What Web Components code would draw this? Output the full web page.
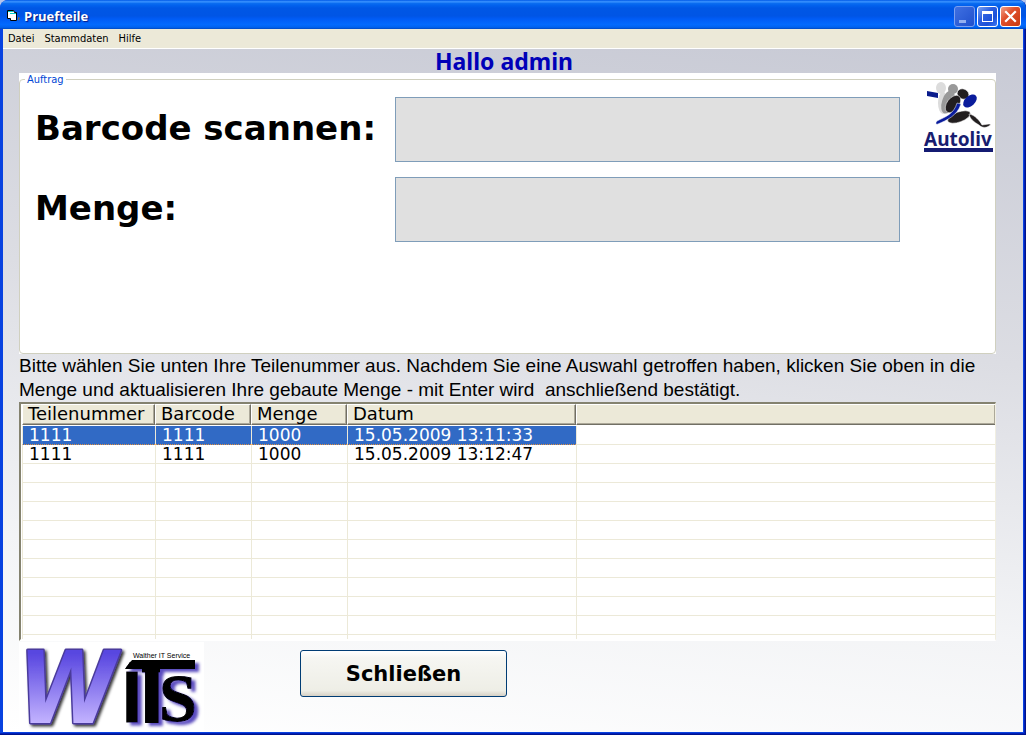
<!DOCTYPE html>
<html lang="de">
<head>
<meta charset="utf-8">
<title>Pruefteile</title>
<style>
  html, body {
    height: 100%;
    margin: 0;
  }
  body {
    font-family: "DejaVu Sans", sans-serif;
    color: #000;
    background: #b4c4ec;
  }
</style>
</head>
<body>
<xp-window>
  <xp-titlebar slot="title">Pruefteile</xp-titlebar>
  <xp-menubar slot="menu" items="Datei,Stammdaten,Hilfe"></xp-menubar>
  <user-greeting>Hallo admin</user-greeting>
  <xp-group label="Auftrag">
    <xp-field label="Barcode scannen:" name="barcode"></xp-field>
    <xp-field label="Menge:" name="menge"></xp-field>
    <autoliv-logo slot="aside"></autoliv-logo>
  </xp-group>
  <help-text>Bitte wählen Sie unten Ihre Teilenummer aus. Nachdem Sie eine Auswahl getroffen haben, klicken Sie oben in die<br>Menge und aktualisieren Ihre gebaute Menge - mit Enter wird&nbsp; anschließend bestätigt.</help-text>
  <part-list></part-list>
  <window-footer>
    <wits-logo></wits-logo>
    <xp-button>Schließen</xp-button>
  </window-footer>
</xp-window>

<script>
function define(name, html, setup) {
  customElements.define(name, class extends HTMLElement {
    constructor() {
      super();
      this.attachShadow({ mode: 'open' });
      this.shadowRoot.innerHTML = html;
    }

    connectedCallback() {
      if (setup) setup(this, this.shadowRoot);
    }
  });
}

define('xp-window', `
  <style>
    :host {
      display: flex;
      flex-direction: column;
      box-sizing: border-box;
      min-height: 100%;
      background: #0842e0;
      box-shadow: inset -1px -1px #00138c, inset -2px -2px #0020b8;
      border-radius: 8px 8px 0 0;
      overflow: hidden;
    }
    #client {
      flex: 1;
      display: flex;
      flex-direction: column;
      margin: 0 3px 3px;
      border-top: 1px solid #fff;
      padding: 0 27px 0 16px;
      background: linear-gradient(186deg, #c8cad5 0%, #dcdde3 40%, #f3f4f6 75%, #fff 100%);
    }
  </style>
  <slot name="title"></slot>
  <slot name="menu"></slot>
  <main id="client"><slot></slot></main>
`);

define('xp-titlebar', `
  <style>
    :host {
      display: flex;
      align-items: center;
      gap: 2px;
      box-sizing: border-box;
      height: 29px;
      padding: 3px 5px 0 6px;
      background: linear-gradient(#0058e6 0%, #3a93ff 6%, #0a6cf0 12%, #0262ee 18%, #0057e5 28%, #0055e5 55%, #005bf5 65%, #026afe 85%, #0062ef 94%, #0048c0 100%);
    }
    h1 {
      flex: 1;
      margin: 0 0 0 2px;
      font: bold 13px/20px "Open Sans", sans-serif;
      color: #fff;
      text-shadow: 1px 1px 1px #0a1883;
    }
    button {
      width: 21px;
      height: 21px;
      padding: 0;
      border: 1px solid #fff;
      border-radius: 3px;
      background: linear-gradient(135deg, #7ba2f0, #2c5fe0 40%, #1c50d8 70%, #3c79f5);
    }
    button svg {
      display: block;
    }
    #min {
      border-color: #7b9ff0;
      background: linear-gradient(135deg, #3f70e2, #2050cc);
    }
    #close {
      background: linear-gradient(135deg, #f0a088, #e0502c 40%, #d2421c 75%, #c83a10);
    }
  </style>
  <svg width="14" height="14" viewBox="0 0 14 14" aria-hidden="true">
    <path d="M1.500 1.500h6l1 2h2v8h-6v-2h-3z" fill="#fff" stroke="#000"/>
    <path d="M2 2h5v1H2zM4 4h6v1H4z" fill="#0cc"/>
    <path d="M12 8l2 1-2 3z" fill="#876a3c"/>
  </svg>
  <h1><slot></slot></h1>
  <button id="min" aria-label="Minimieren"><svg width="19" height="19"><path d="M4 13h7v3H4z" fill="#94b0f0"/></svg></button>
  <button id="max" aria-label="Maximieren"><svg width="19" height="19"><path d="M4 4h11v11H4zM5 7v7h9V7z" fill="#fff" fill-rule="evenodd"/></svg></button>
  <button id="close" aria-label="Beenden"><svg width="19" height="19"><path d="M5 5l9 9M14 5l-9 9" stroke="#fff" stroke-width="2.200" stroke-linecap="square"/></svg></button>
`);

define('xp-menubar', `
  <style>
    :host {
      display: block;
      margin: 0 3px;
      background: #ece9d8;
    }
    nav {
      display: flex;
      gap: 10px;
      height: 19px;
      padding: 0 5px;
    }
    a {
      font: 11px/19px "DejaVu Sans Condensed", "DejaVu Sans", sans-serif;
      color: #000;
      text-decoration: none;
    }
  </style>
  <nav></nav>
`, (el, root) => {
  root.querySelector('nav').innerHTML = el.getAttribute('items').split(',')
    .map(item => `<a href="#">${item}</a>`).join('');
});

define('user-greeting', `
  <style>
    :host {
      display: block;
    }
    h2 {
      margin: 0;
      padding-left: 416px;
      font: bold 23px/24px "Noto Sans", sans-serif;
      color: #0000b8;
    }
  </style>
  <h2><slot></slot></h2>
`);

define('xp-group', `
  <style>
    :host {
      display: block;
      background: #fff;
    }
    fieldset {
      display: flex;
      gap: 22px;
      box-sizing: border-box;
      min-width: 0;
      min-height: 281px;
      margin: 0;
      padding: 0 1px 0 15px;
      border: 1px solid #d0d0bf;
      border-radius: 4px;
    }
    legend {
      margin-left: -10px;
      padding: 0 2px;
      font: 11px/13px "DejaVu Sans Condensed", "DejaVu Sans", sans-serif;
      color: #0046d5;
    }
    #fields {
      flex: 1;
      min-width: 0;
      display: flex;
      flex-direction: column;
      gap: 15px;
      padding-top: 11px;
    }
  </style>
  <fieldset>
    <legend></legend>
    <div id="fields"><slot></slot></div>
    <slot name="aside"></slot>
  </fieldset>
`, (el, root) => {
  root.querySelector('legend').textContent = el.getAttribute('label');
});

define('xp-field', `
  <style>
    :host {
      display: flex;
    }
    label {
      flex: 0 0 360px;
      font-weight: bold;
      font-size: 34px;
      line-height: 62px;
      white-space: nowrap;
    }
    input {
      flex: 1;
      min-width: 0;
      box-sizing: border-box;
      height: 65px;
      padding: 4px 8px;
      border: 1px solid #7f9db9;
      background: #e0e0e0;
      font: bold 34px "DejaVu Sans", sans-serif;
    }
  </style>
  <label for="field"></label>
  <input id="field" type="text">
`, (el, root) => {
  root.querySelector('label').textContent = el.getAttribute('label');
  root.querySelector('input').name = el.getAttribute('name');
});

define('autoliv-logo', `
  <style>
    :host {
      display: block;
      flex: none;
      width: 72px;
    }
    svg {
      display: block;
      overflow: visible;
    }
    text {
      font: bold 19px "Noto Sans", sans-serif;
    }
  </style>
  <svg width="72" height="72" viewBox="0 0 72 72" role="img" aria-label="Autoliv">
    <path d="M5 5l11 2v5L5 10z" fill="#0a1c8c"/>
    <g fill="#dcdcdc">
      <ellipse cx="19" cy="2" rx="5" ry="6"/>
      <ellipse cx="21" cy="17" rx="5" ry="11"/>
    </g>
    <g fill="#999">
      <circle cx="31" cy="3" r="5"/>
      <ellipse cx="26" cy="16" rx="6" ry="12" transform="rotate(18 26 16)"/>
    </g>
    <g fill="#221e1f" stroke="#fff" stroke-width="0.500">
      <ellipse cx="41" cy="8" rx="6" ry="5" transform="rotate(25 41 8)"/>
      <ellipse cx="31" cy="18" rx="6" ry="10" transform="rotate(38 31 18)"/>
      <ellipse cx="37" cy="31" rx="12" ry="5" transform="rotate(-20 37 31)"/>
      <path d="M47 28c6 1 11 7 13 11l7-1c2 0 2 1 0 2-3 2-7 2-10-1-5-3-9-6-10-11z"/>
    </g>
    <ellipse cx="48" cy="15" rx="8" ry="5" transform="rotate(-42 48 15)" fill="#0a1c9c"/>
    <path d="M35 17l4 1C35 30 25 34 16 38c-2 1-3-1-1-3C23 31 32 28 35 17z" fill="#0a1c9c" stroke="#fff" stroke-width="0.500"/>
    <text x="2" y="60" fill="#181d70">Autoliv</text>
    <path d="M2 62h69v4H2z" fill="#141b72"/>
  </svg>
`);

define('help-text', `
  <style>
    :host {
      display: block;
    }
    p {
      margin: 0;
      font: 19px/24px "Liberation Sans", Arial, sans-serif;
    }
  </style>
  <p><slot></slot></p>
`);

define('part-list', `
  <style>
    :host {
      flex: 1 1 0;
      display: block;
      min-height: 120px;
      overflow: hidden;
      padding-left: 1px;
      background: #fff;
      border: 2px solid;
      border-color: #84826f #f1efe2 #fff #84826f;
      border-right-width: 1px;
    }
    table {
      width: 100%;
      table-layout: fixed;
      border-spacing: 0;
      font-size: 17px;
    }
    th, td {
      box-sizing: border-box;
      text-align: left;
      vertical-align: top;
      font-weight: normal;
      white-space: nowrap;
    }
    th {
      height: 21px;
      padding: 0 0 0 5px;
      font-size: 18px;
      line-height: 18px;
      background: #ece9d8;
      border-top: 1px solid #fff;
      border-left: 1px solid #fff;
      border-right: 1px solid #716f64;
      border-bottom: 1px solid #716f64;
      box-shadow: inset -1px -1px #aca899;
    }
    td {
      height: 19px;
      padding: 0 0 0 6px;
      line-height: 18px;
      border-left: 1px solid #ece9d8;
      border-bottom: 1px solid #ece9d8;
    }
    tbody::before {
      content: "";
      display: table-row;
      height: 1px;
    }
    th:last-child {
      border-right: 0;
    }
    .selected td:not(:last-child) {
      background: #316ac5;
      color: #fff;
      border-bottom: 1px dotted #e09040;
    }
    .c1 { width: 133px; }
    .c2, .c3 { width: 96px; }
    .c4 { width: 229px; }
  </style>
  <table>
    <thead>
      <tr><th class="c1">Teilenummer</th><th class="c2">Barcode</th><th class="c3">Menge</th><th class="c4">Datum</th><th></th></tr>
    </thead>
    <tbody></tbody>
  </table>
`, (el, root) => {
  const rows = [
    ['1111', '1111', '1000', '15.05.2009 13:11:33', ''],
    ['1111', '1111', '1000', '15.05.2009 13:12:47', '']
  ];
  // empty grid lines fill the rest of the box
  while (rows.length < 12) rows.push(['', '', '', '', '']);
  root.querySelector('tbody').innerHTML = rows.map((row, i) =>
    `<tr${i === 0 ? ' class="selected"' : ''}>${row.map(cell => `<td>${cell}</td>`).join('')}</tr>`
  ).join('');
});

define('window-footer', `
  <style>
    :host {
      display: flex;
      align-items: flex-start;
      gap: 96px;
      margin-top: 1px;
    }
    ::slotted(xp-button) {
      margin-top: 8px;
    }
  </style>
  <slot></slot>
`);

define('wits-logo', `
  <style>
    :host {
      display: block;
      width: 185px;
      background: #fff;
    }
    svg {
      display: block;
      overflow: visible;
    }
    .w { font: italic bold 100px "DejaVu Sans Condensed", "DejaVu Sans", sans-serif; }
    .sans { font-family: "Liberation Sans", sans-serif; font-weight: bold; }
    .serif { font: bold 68px "Liberation Serif", serif; }
    .small { font: 7px "Liberation Sans", sans-serif; }
  </style>
  <svg width="185" height="90" viewBox="0 0 185 90" role="img" aria-label="WITS">
    <defs>
      <linearGradient id="violet" x1="0" y1="0" x2="0" y2="1">
        <stop offset="0.200" stop-color="#5846e0"/>
        <stop offset="0.800" stop-color="#c4b4ff"/>
      </linearGradient>
      <filter id="dark" x="-10%" y="-10%" width="130%" height="130%">
        <feDropShadow dx="2" dy="2" stdDeviation="1.500" flood-color="#000" flood-opacity="0.800"/>
      </filter>
      <filter id="blue" x="-10%" y="-10%" width="130%" height="130%">
        <feDropShadow dx="4" dy="3" stdDeviation="1.500" flood-color="#4838b8" flood-opacity="0.900"/>
      </filter>
      <!-- keeps the crossbar of the T inside the slanted roof -->
      <clipPath id="roof">
        <path d="M113 17h64v10h-36v56h-18V27h-17z"/>
      </clipPath>
    </defs>
    <text class="w" x="-1" y="81" fill="url(#violet)" stroke="#4a3a9c" stroke-width="3" stroke-linejoin="round" paint-order="stroke" filter="url(#dark)">W</text>
    <g filter="url(#blue)">
      <path d="M113 18h63v9h-70z"/>
      <text class="sans" x="103" y="80" font-size="72" stroke="#000">I</text>
      <text class="sans" x="106" y="80" font-size="88" stroke="#000" clip-path="url(#roof)">T</text>
      <text class="serif" x="140" y="79" stroke="#000">S</text>
    </g>
    <text class="small" x="114" y="16">Walther IT Service</text>
  </svg>
`);

define('xp-button', `
  <style>
    :host {
      display: block;
    }
    button {
      display: block;
      width: 207px;
      height: 47px;
      padding: 0;
      border: 1px solid #003c74;
      border-radius: 3px;
      background: linear-gradient(#fff 0%, #f6f6f2 15%, #eeeee6 88%, #d6d0c5 100%);
      font: bold 21px "DejaVu Sans", sans-serif;
      color: #000;
    }
  </style>
  <button type="button"><slot></slot></button>
`);
</script>
</body>
</html>
